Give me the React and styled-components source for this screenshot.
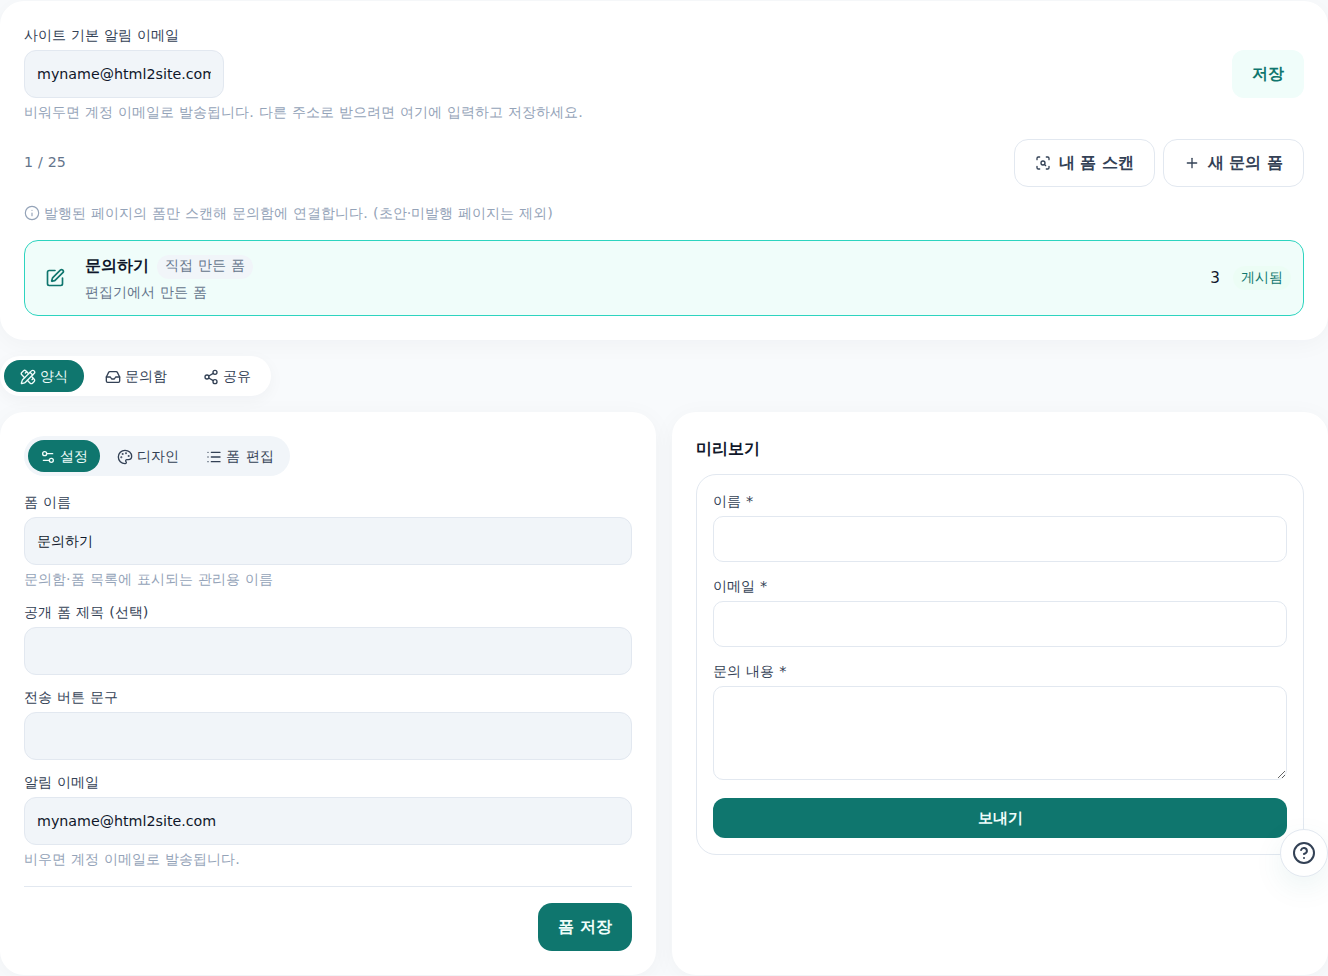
import React from "react";
import styled, { createGlobalStyle } from "styled-components";
import { ScanSearch, Plus, Info, SquarePen, PencilRuler, Inbox, Share2, Settings2, Palette, List, CircleHelp } from "lucide-react";

const FONT = `"DejaVu Sans", sans-serif`;
const Global = createGlobalStyle`
  html, body { margin: 0; padding: 0; background: #f8fafc; }
  body { font-family: ${FONT}; color: #0f172a; word-spacing: 0.5px; }
  * { box-sizing: border-box; }
`;
const Page = styled.div`
  width: 1328px; height: 976px; overflow: hidden; position: relative; padding-top: 1px;
  display: flex; flex-direction: column;
`;
const TopCard = styled.section`
  height: 339px; background: #fff; border-radius: 24px; padding: 24px;
  box-shadow: 0 4px 24px rgba(15, 23, 42, 0.04);
`;
const FieldLabel = styled.label`
  display: block; font-size: 14.4px; line-height: 20px; color: #334155; margin-bottom: ${p => p.$mb ?? 5}px;
`;
const Row = styled.div`
  display: flex; align-items: center; justify-content: space-between;
`;
const Input = styled.input`
  display: block; width: ${p => p.$w || "100%"}; height: 48px; padding: 0 12px; border-radius: 12px;
  border: 1px solid #e2e8f0; background: #f1f5f9; color: #0f172a;
  font: 14.25px ${FONT}; outline: none;
`;
const SaveSoft = styled.button`
  width: 72px; height: 48px; border: 0; border-radius: 12px; background: #f0fdfa; color: #0f766e;
  font: 600 16px ${FONT};
`;
const Hint = styled.p`
  margin: ${p => p.$mt ?? 5}px 0 0; font-size: 14.4px; line-height: 18px; color: #94a3b8;
  display: flex; align-items: center; gap: 4px;
`;
const Toolbar = styled(Row)`
  margin-top: 18px; height: 48px;
`;
const Count = styled.span`
  font-size: 14.2px; color: #64748b; position: relative; top: -1px;
`;
const Actions = styled.div`
  display: flex; gap: 8px;
`;
const OutlineBtn = styled.button`
  height: 48px; width: ${p => p.$w}px; border: 1px solid #e2e8f0; border-radius: 14px; background: #fff; color: #334155;
  display: flex; align-items: center; justify-content: center; gap: 8px;
  font: 600 16px ${FONT};
`;
const FormRow = styled.div`
  margin-top: 18px; height: 76px; border: 1px solid #2dd4bf; border-radius: 14px; background: #f0fdfa;
  display: flex; align-items: center; padding: 0 20px;
`;
const FormIcon = styled.div`
  width: 20px; height: 20px; color: #0f766e; display: flex; margin-right: 20px;
`;
const FormInfo = styled.div`
  flex: 1; display: flex; flex-direction: column; gap: 5px;
`;
const TitleLine = styled.div`
  display: flex; align-items: center; gap: 8px; height: 24px;
`;
const FormTitle = styled.strong`
  font-size: 16px; font-weight: 700; color: #0f172a;
`;
const Chip = styled.span`
  font-size: 13.9px; line-height: 20px; height: 24px; padding: 0 8px; border-radius: 999px; background: #f1f5f9; color: #64748b;
`;
const FormSub = styled.span`
  font-size: 13.9px; line-height: 16px; padding-bottom: 2px; color: #64748b;
`;
const Num = styled.span`
  font-size: 15.2px; color: #0f172a; margin-right: 13px;
`;
const Status = styled.span`
  font-size: 13.76px; line-height: 22px; padding: 0 8px 2px; border-radius: 999px; background: #ecfdf5; color: #0f766e; margin-right: -8px;
`;
const MainTabs = styled.nav`
  margin-top: 16px; align-self: flex-start; height: 40px; width: 271px; padding: 4px; border-radius: 20px; background: #fff;
  display: flex; gap: 0; box-shadow: 0 4px 16px rgba(15, 23, 42, 0.04);
`;
const Tab = styled.button`
  width: ${p => p.$w}px; height: 32px; border: 0; border-radius: 16px; padding: 1px 0 0;
  background: ${p => (p.$active ? "#0f766e" : "transparent")}; color: ${p => (p.$active ? "#f0fdfa" : "#334155")};
  display: flex; align-items: center; justify-content: center; gap: 4px;
  font: 14.4px ${FONT}; word-spacing: 0.5px;
`;
const Columns = styled.div`
  margin-top: 16px; flex: 1; display: grid; grid-template-columns: 656px 656px; gap: 16px;
`;
const Panel = styled.section`
  background: #fff; border-radius: 24px; padding: 24px; height: 563px;
  box-shadow: 0 4px 24px rgba(15, 23, 42, 0.04);
`;
const SubTabs = styled.nav`
  width: 266px; height: 40px; padding: 4px; border-radius: 20px; background: #f1f5f9; display: flex; margin-bottom: 16px;
`;
const Field = styled.div`
  margin-bottom: ${p => p.$mb ?? 12}px;
`;
const Divider = styled.hr`
  border: 0; border-top: 1px solid #e2e8f0; margin: 18px 0 16px;
`;
const Footer = styled.div`
  display: flex; justify-content: flex-end;
`;
const PrimaryBtn = styled.button`
  width: 94px; height: 48px; border: 0; border-radius: 14px; background: #0f766e; color: #f0fdfa;
  font: 600 16px ${FONT};
`;
const PreviewTitle = styled.h2`
  margin: 1px 0 13px; font-size: 16px; line-height: 24px; font-weight: 600; color: #0f172a;
`;
const PreviewBox = styled.div`
  border: 1px solid #e2e8f0; border-radius: 20px; padding: 16px; height: 381px; background: #fff;
`;
const PreviewInput = styled.input`
  display: block; width: 100%; height: 46px; border: 1px solid #e2e8f0; border-radius: 10px; background: #fff; outline: none;
`;
const PreviewArea = styled.textarea`
  display: block; width: 100%; height: 94px; border: 1px solid #e2e8f0; border-radius: 10px; background: #fff; outline: none; resize: vertical;
`;
const PreviewField = styled.div`
  margin-bottom: 14px;
`;
const Send = styled.button`
  display: block; width: 100%; height: 40px; margin-top: 18px; border: 0; border-radius: 12px; background: #0f766e; color: #f0fdfa;
  font: 600 15px ${FONT};
`;
const Help = styled.button`
  position: absolute; left: 1280px; top: 829px; width: 48px; height: 48px; border-radius: 50%;
  border: 1px solid #e2e8f0; background: #fff; color: #334155; display: flex; align-items: center; justify-content: center; padding: 0;
  box-shadow: 0 10px 30px rgba(15, 118, 110, 0.08);
`;

export default function App() {
  return (
    <Page>
      <Global />
      <TopCard>
        <FieldLabel>사이트 기본 알림 이메일</FieldLabel>
        <Row>
          <Input $w="200px" defaultValue="myname@html2site.com" />
          <SaveSoft>저장</SaveSoft>
        </Row>
        <Hint>비워두면 계정 이메일로 발송됩니다. 다른 주소로 받으려면 여기에 입력하고 저장하세요.</Hint>
        <Toolbar>
          <Count>1 / 25</Count>
          <Actions>
            <OutlineBtn $w={141}><ScanSearch size={16} />내 폼 스캔</OutlineBtn>
            <OutlineBtn $w={141}><Plus size={16} />새 문의 폼</OutlineBtn>
          </Actions>
        </Toolbar>
        <Hint $mt={17}><Info size={16} strokeWidth={1.75} />발행된 페이지의 폼만 스캔해 문의함에 연결합니다. (초안·미발행 페이지는 제외)</Hint>
        <FormRow>
          <FormIcon><SquarePen size={20} /></FormIcon>
          <FormInfo>
            <TitleLine><FormTitle>문의하기</FormTitle><Chip>직접 만든 폼</Chip></TitleLine>
            <FormSub>편집기에서 만든 폼</FormSub>
          </FormInfo>
          <Num>3</Num>
          <Status>게시됨</Status>
        </FormRow>
      </TopCard>
      <MainTabs>
        <Tab $active $w={80}><PencilRuler size={16} />양식</Tab>
        <Tab $w={103}><Inbox size={16} />문의함</Tab>
        <Tab $w={79}><Share2 size={16} />공유</Tab>
      </MainTabs>
      <Columns>
        <Panel>
          <SubTabs>
            <Tab $active $w={72}><Settings2 size={16} />설정</Tab>
            <Tab $w={95}><Palette size={16} />디자인</Tab>
            <Tab $w={90}><List size={16} />폼 편집</Tab>
          </SubTabs>
          <Field $mb={14}>
            <FieldLabel>폼 이름</FieldLabel>
            <Input defaultValue="문의하기" />
            <Hint>문의함·폼 목록에 표시되는 관리용 이름</Hint>
          </Field>
          <Field>
            <FieldLabel>공개 폼 제목 (선택)</FieldLabel>
            <Input />
          </Field>
          <Field>
            <FieldLabel>전송 버튼 문구</FieldLabel>
            <Input />
          </Field>
          <Field $mb={0}>
            <FieldLabel>알림 이메일</FieldLabel>
            <Input defaultValue="myname@html2site.com" />
            <Hint>비우면 계정 이메일로 발송됩니다.</Hint>
          </Field>
          <Divider />
          <Footer><PrimaryBtn>폼 저장</PrimaryBtn></Footer>
        </Panel>
        <Panel>
          <PreviewTitle>미리보기</PreviewTitle>
          <PreviewBox>
            <PreviewField>
              <FieldLabel>이름 *</FieldLabel>
              <PreviewInput />
            </PreviewField>
            <PreviewField>
              <FieldLabel>이메일 *</FieldLabel>
              <PreviewInput />
            </PreviewField>
            <PreviewField>
              <FieldLabel>문의 내용 *</FieldLabel>
              <PreviewArea />
            </PreviewField>
            <Send>보내기</Send>
          </PreviewBox>
        </Panel>
      </Columns>
      <Help aria-label="도움말"><CircleHelp size={24} /></Help>
    </Page>
  );
}
